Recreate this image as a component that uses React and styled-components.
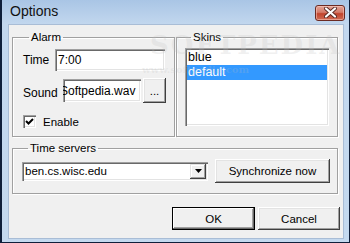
import React from "react";
import styled, { createGlobalStyle } from "styled-components";

const GlobalStyle = createGlobalStyle`
  html, body {
    margin: 0;
    padding: 0;
    background: #0d1b33;
  }
  * {
    box-sizing: border-box;
  }
`;

const Window = styled.div`
  position: relative;
  width: 350px;
  height: 243px;
  display: flex;
  flex-direction: column;
  background: linear-gradient(#a9c5e5 0px, #c2d7ee 24px, #c4d9ef 100%);
  border-left: 2px solid #0f1f3a;
  border-right: 1px solid #0f1f3a;
  border-bottom: 1px solid #0f1f3a;
  font-family: "Liberation Sans", Arial, sans-serif;
  overflow: hidden;
`;

const TitleBar = styled.div`
  height: 24px;
  flex: none;
  display: flex;
  align-items: center;
  justify-content: space-between;
  padding: 0 4px 2px 8px;
`;

const Title = styled.span`
  font-size: 14px;
  color: #111;
`;

const CloseButton = styled.div`
  width: 30px;
  height: 16px;
  margin-top: 3px;
  border: 1px solid #6b2a22;
  border-radius: 3px;
  background: linear-gradient(#e2a497 0%, #d47b69 45%, #c1432c 55%, #cf6c55 100%);
  box-shadow: inset 0 0 0 1px rgba(255, 210, 200, 0.5);
  display: flex;
  align-items: center;
  justify-content: center;
`;

const Client = styled.div`
  flex: 1;
  margin: 0 5px 3px 6px;
  background: #f0f0f0;
  border: 1px solid #a9bdd6;
  padding: 6px 4px 0 3px;
  display: flex;
  flex-direction: column;
  font-size: 11.5px;
  color: #000;
`;

const TopRow = styled.div`
  display: flex;
  gap: 1px;
`;

const Group = styled.fieldset`
  margin: ${(p) => p.$mt || 0}px 0 0 0;
  width: ${(p) => p.$w}px;
  height: ${(p) => p.$h}px;
  padding: 0 0 0 ${(p) => p.$pl || 9}px;
  border: 1px solid #a0a0a0;
  box-shadow: inset 1px 1px 0 #fff, 1px 1px 0 #fff;
  min-width: 0;
`;

const Legend = styled.legend`
  padding: 0 2px;
  margin-left: 6px;
  line-height: 13px;
  font-size: 11.5px;
`;

const Row = styled.div`
  display: flex;
  align-items: center;
  margin-top: ${(p) => p.$mt}px;
`;

const Label = styled.span`
  width: ${(p) => p.$w}px;
  flex: none;
  font-size: 12px;
  padding-top: ${(p) => p.$dy || 0}px;
`;

const Sunken = styled.div`
  width: ${(p) => p.$w}px;
  height: ${(p) => p.$h}px;
  flex: none;
  background: #fff;
  box-shadow: inset 1px 1px 0 #a0a0a0, inset 2px 2px 0 #696969,
    inset -1px -1px 0 #fff, inset -2px -2px 0 #e3e3e3;
  padding: 2px 2px 2px 3px;
  display: flex;
  align-items: center;
  overflow: hidden;
  white-space: nowrap;
`;

const Field = styled(Sunken)`
  font-size: 12px;
  text-indent: ${(p) => p.$indent || 0}px;
`;

const Button = styled.div`
  width: ${(p) => p.$w}px;
  height: ${(p) => p.$h}px;
  flex: none;
  margin-left: ${(p) => p.$ml || 0}px;
  background: #f0f0f0;
  display: flex;
  align-items: center;
  justify-content: center;
  box-shadow: ${(p) =>
    p.$default
      ? "inset 0 0 0 1px #000, inset -2px -2px 0 #696969, inset 2px 2px 0 #fff, inset -3px -3px 0 #a0a0a0"
      : "inset -1px -1px 0 #404040, inset 1px 1px 0 #fff, inset -2px -2px 0 #a0a0a0, inset 2px 2px 0 #e3e3e3"};
`;

const Check = styled(Sunken)`
  padding: 0;
  justify-content: center;
  margin-right: 7px;
`;

const List = styled(Sunken)`
  display: block;
  padding: 2px;
  margin-top: 4px;
`;

const Item = styled.div`
  height: 15px;
  line-height: 15px;
  padding-left: 1px;
  font-size: 12.5px;
  background: ${(p) => (p.$selected ? "#3399ff" : "transparent")};
  color: ${(p) => (p.$selected ? "#fff" : "#000")};
`;

const ComboArrow = styled.div`
  margin-left: auto;
  width: 16px;
  height: 15px;
  flex: none;
  background: #f0f0f0;
  display: flex;
  align-items: center;
  justify-content: center;
  box-shadow: inset -1px -1px 0 #404040, inset 1px 1px 0 #e3e3e3,
    inset -2px -2px 0 #a0a0a0, inset 2px 2px 0 #fff;
`;

const ButtonRow = styled.div`
  display: flex;
  justify-content: flex-end;
  margin-top: 13px;
  margin-right: -1px;
`;

const Watermark = styled.div`
  position: absolute;
  left: ${(p) => p.$x}px;
  top: ${(p) => p.$y}px;
  font-family: "DejaVu Serif", serif;
  font-size: ${(p) => p.$size}px;
  font-weight: bold;
  letter-spacing: ${(p) => p.$ls || 0}px;
  color: rgba(190, 190, 190, 0.22);
  pointer-events: none;
  white-space: nowrap;
`;

export default function App() {
  return (
    <>
      <GlobalStyle />
      <Window>
        <TitleBar>
          <Title>Options</Title>
          <CloseButton>
            <svg width="13" height="11" viewBox="0 0 13 11">
              <path
                d="M2 1.5 L11 9.5 M11 1.5 L2 9.5"
                stroke="#5a2a24"
                strokeWidth="4"
                strokeLinecap="round"
              />
              <path
                d="M2 1.5 L11 9.5 M11 1.5 L2 9.5"
                stroke="#fff"
                strokeWidth="2.2"
                strokeLinecap="round"
              />
            </svg>
          </CloseButton>
        </TitleBar>
        <Client>
          <TopRow>
            <Group $w={163} $h={106} $pl={10}>
              <Legend>Alarm</Legend>
              <Row $mt={5}>
                <Label $w={32}>Time</Label>
                <Field $w={110} $h={22}>7:00</Field>
              </Row>
              <Row $mt={7}>
                <Label $w={40} $dy={4}>Sound</Label>
                <Field $w={78} $h={23} $indent={-6}>Softpedia.wav</Field>
                <Button $w={23} $h={25} $ml={2}>...</Button>
              </Row>
              <Row $mt={12}>
                <Check $w={13} $h={13}>
                  <svg width="9" height="9" viewBox="0 0 9 9">
                    <path d="M1 4 L3.5 6.5 L8 2" stroke="#000" strokeWidth="2" fill="none" />
                  </svg>
                </Check>
                <span>Enable</span>
              </Row>
            </Group>
            <Group $w={162} $h={106} $pl={8}>
              <Legend>Skins</Legend>
              <List $w={144} $h={78}>
                <Item>blue</Item>
                <Item $selected>default</Item>
              </List>
            </Group>
          </TopRow>
          <Group $w={326} $h={52} $pl={9} $mt={5}>
            <Legend>Time servers</Legend>
            <Row $mt={4}>
              <Sunken $w={186} $h={19}>
                <span>ben.cs.wisc.edu</span>
                <ComboArrow>
                  <svg width="7" height="4" viewBox="0 0 7 4">
                    <path d="M0 0 H7 L3.5 4 Z" fill="#000" />
                  </svg>
                </ComboArrow>
              </Sunken>
              <Button $w={115} $h={24} $ml={7}>Synchronize now</Button>
            </Row>
          </Group>
          <ButtonRow>
            <Button $w={83} $h={23} $default>OK</Button>
            <Button $w={82} $h={23} $ml={3}>Cancel</Button>
          </ButtonRow>
        </Client>
        <Watermark $x={148} $y={30} $size={26} $ls={2}>SOFTPEDIA</Watermark>
        <Watermark $x={140} $y={64} $size={10}>www.softpedia.com</Watermark>
      </Window>
    </>
  );
}
